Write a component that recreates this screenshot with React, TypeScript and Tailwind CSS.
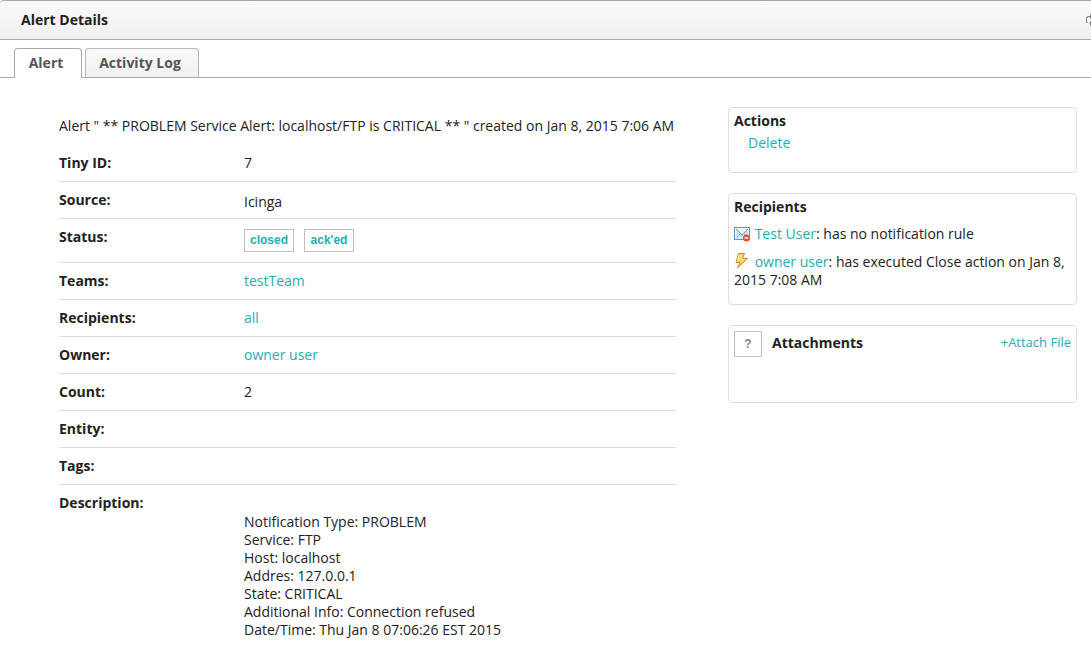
import React from "react"

interface DetailRow {
  label: string
  value?: React.ReactNode
  valueClass?: string
}

function TextLink({ children, className = "" }: { children: React.ReactNode; className?: string }) {
  return (
    <a href="#" className={`text-[#2aabb4] hover:underline ${className}`}>
      {children}
    </a>
  )
}

function StatusButton({ label }: { label: string }) {
  return (
    <button
      type="button"
      className="h-[23px] w-[50px] border border-[#c0c0c0] bg-white pb-px font-['Liberation_Sans',sans-serif] text-xs font-bold text-[#2aabb4]"
    >
      {label}
    </button>
  )
}

function Card({ className = "", children }: { className?: string; children: React.ReactNode }) {
  return <section className={`rounded border border-[#e2dcdc] px-[5px] pt-1 ${className}`}>{children}</section>
}

function MailBlockedIcon() {
  return (
    <svg width="17" height="16" viewBox="0 0 17 16" className="inline-block align-[-3px]">
      <rect x="0.5" y="1.5" width="15" height="12" fill="#c9e2f6" stroke="#5b93c0" />
      <path d="M1.5 2.5h13v10h-13z" fill="none" stroke="#f2f9fe" />
      <path d="M2 3l6 6 6-6" fill="#e4f1fc" stroke="#6a9cc5" />
      <path d="M2.5 12l3.5-4M13.5 12L10 8" fill="none" stroke="#8fb6d6" />
      <circle cx="12.5" cy="12" r="3.5" fill="#e8502e" />
      <path d="M10.5 12h4" stroke="#fff" strokeWidth="1.4" />
    </svg>
  )
}

function LightningIcon() {
  return (
    <svg width="17" height="16" viewBox="0 0 17 16" className="inline-block align-[-2px]">
      <path
        d="M4.5 0.5h6L8.5 5.5h5L3.5 15l2.500-5.500h-4z"
        fill="#fbd75b"
        stroke="#c98a35"
        strokeLinejoin="round"
      />
      <path d="M5.300 2L3.500 8M8 6.500h3" fill="none" stroke="#fff3b8" />
    </svg>
  )
}

function RefreshIcon() {
  return (
    <svg width="14" height="14" viewBox="0 0 14 14" fill="none" stroke="#777">
      <path d="M1.5 9.5h-1v-5h1v-1h4M4.500 1.500v4M12.500 4.500h1v5h-1v1h-9M4.500 8.500v4" />
    </svg>
  )
}

const rows: DetailRow[] = [
  { label: "Tiny ID:", value: "7" },
  { label: "Source:", value: "Icinga", valueClass: "pt-[11px] pb-[7px]" },
  {
    label: "Status:",
    value: (
      <div className="flex gap-[10px]">
        <StatusButton label="closed" />
        <StatusButton label="ack'ed" />
      </div>
    ),
    valueClass: "py-[10px]",
  },
  { label: "Teams:", value: <TextLink>testTeam</TextLink> },
  { label: "Recipients:", value: <TextLink>all</TextLink> },
  { label: "Owner:", value: <TextLink>owner user</TextLink> },
  { label: "Count:", value: "2" },
  { label: "Entity:" },
  { label: "Tags:" },
]

const description = [
  "Notification Type: PROBLEM",
  "Service: FTP",
  "Host: localhost",
  "Addres: 127.0.0.1",
  "State: CRITICAL",
  "Additional Info: Connection refused",
  "Date/Time: Thu Jan 8 07:06:26 EST 2015",
]

export default function App() {
  return (
    <div className="bg-white font-['Open_Sans','Noto_Sans',sans-serif] text-sm leading-[18px] text-[#222]">
      <header className="flex h-10 items-center justify-between overflow-hidden rounded-tl border-y border-[#a8a8a8] bg-linear-to-b from-[#fafafa] to-[#f0f0f0] pl-[21px]">
        <h1 className="font-bold">Alert Details</h1>
        <button type="button" aria-label="Refresh" className="-mr-[9px] shrink-0">
          <RefreshIcon />
        </button>
      </header>

      <nav className="mt-2 flex h-[30px] gap-[3px] border-b border-[#a8a8a8] pl-[14px] font-bold text-[#555]">
        <button type="button" className="-mb-px w-[68px] rounded-t border border-b-0 border-[#a8a8a8] bg-white pr-1 pb-px">
          Alert
        </button>
        <button
          type="button"
          className="w-[114px] rounded-t border border-b-0 border-[#b8b8b8] bg-linear-to-b from-[#fafafa] to-[#f0f0f0] pr-1"
        >
          Activity Log
        </button>
      </nav>

      <main className="flex items-start gap-[52px] pt-[29px] pr-[14px] pl-[59px]">
        <div className="min-w-0 flex-1 pt-[10px]">
          <p className="whitespace-nowrap">
            Alert " ** PROBLEM Service Alert: localhost/FTP is CRITICAL ** " created on Jan 8, 2015 7:06 AM
          </p>
          <dl className="mt-[10px]">
            {rows.map((row) => (
              <div key={row.label} className="flex border-b border-[#dcdcdc]">
                <dt className="w-[185px] py-[9px] font-bold">{row.label}</dt>
                <dd className={row.valueClass ?? "py-[9px]"}>{row.value}</dd>
              </div>
            ))}
            <div className="pt-[9px]">
              <dt className="font-bold">Description:</dt>
              <dd className="mt-px ml-[185px]">
                {description.map((line) => (
                  <p key={line}>{line}</p>
                ))}
              </dd>
            </div>
          </dl>
        </div>

        <aside className="flex w-[349px] shrink-0 flex-col gap-5">
          <Card className="pb-5">
            <h2 className="font-bold">Actions</h2>
            <div className="mt-1 pl-[14px]">
              <TextLink>Delete</TextLink>
            </div>
          </Card>

          <Card className="pb-[15px]">
            <h2 className="font-bold">Recipients</h2>
            <p className="mt-[9px]">
              <MailBlockedIcon /> <TextLink>Test User</TextLink>: has no notification rule
            </p>
            <p className="mt-[10px]">
              <LightningIcon /> <TextLink>owner user</TextLink>: has executed Close action on Jan 8, 2015 7:08 AM
            </p>
          </Card>

          <Card className="pb-[45px]">
            <div className="flex items-start pt-px">
              <button
                type="button"
                aria-label="Attachment help"
                className="mr-[10px] h-[26px] w-7 border border-[#c0c0c0] font-['Liberation_Sans',sans-serif] text-xs font-bold text-[#888]"
              >
                ?
              </button>
              <h2 className="mt-[3px] font-bold">Attachments</h2>
              <TextLink className="mt-[2px] ml-auto text-[13px] leading-[18px]">+Attach File</TextLink>
            </div>
          </Card>
        </aside>
      </main>
    </div>
  )
}
